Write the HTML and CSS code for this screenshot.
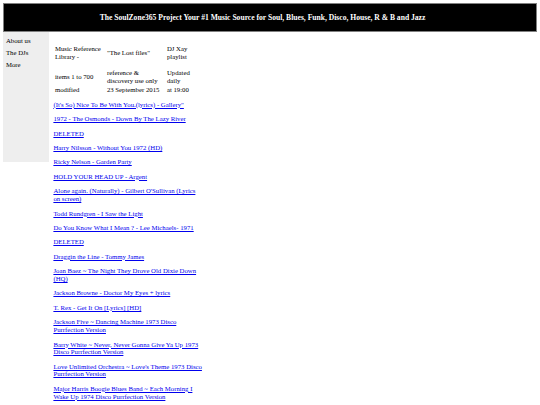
FILE: index.html
```html
<!DOCTYPE html>
<html lang="en">
<head>
<meta charset="utf-8">
<title>The SoulZone365 Project</title>
<link rel="stylesheet" href="styles.css">
</head>
<body>
<div class="header">
  <div class="title">The SoulZone365 Project Your #1 Music Source for Soul, Blues, Funk, Disco, House, R &amp; B and Jazz</div>
</div>
<div class="main">
  <div class="sidebar">
    <div class="nav-item">About us</div>
    <div class="nav-item">The DJs</div>
    <div class="nav-item">More</div>
  </div>
  <div class="content">
    <table class="info">
      <tr class="first">
        <td class="c1">Music Reference Library -</td>
        <td class="c2">"The Lost files"</td>
        <td class="c3">DJ Xay playlist</td>
      </tr>
      <tr>
        <td class="c1">items 1 to 700</td>
        <td class="c2">reference &amp; discovery use only</td>
        <td class="c3">Updated daily</td>
      </tr>
      <tr>
        <td class="c1">modified</td>
        <td class="c2">23 September 2015</td>
        <td class="c3">at 19:00</td>
      </tr>
    </table>
    <p><a href="#">(It's So) Nice To Be With You.(lyrics) - Gallery"</a></p>
    <p><a href="#">1972 - The Osmonds - Down By The Lazy River</a></p>
    <p><a href="#">DELETED</a></p>
    <p><a href="#">Harry Nilsson - Without You 1972 (HD)</a></p>
    <p><a href="#">Ricky Nelson - Garden Party</a></p>
    <p><a href="#">HOLD YOUR HEAD UP - Argent</a></p>
    <p><a href="#">Alone again. (Naturally) - Gilbert O'Sullivan (Lyrics on screen)</a></p>
    <p><a href="#">Todd Rundgren - I Saw the Light</a></p>
    <p><a href="#">Do You Know What I Mean ? - Lee Michaels- 1971</a></p>
    <p><a href="#">DELETED</a></p>
    <p><a href="#">Draggin the Line - Tommy James</a></p>
    <p><a href="#">Joan Baez ~ The Night They Drove Old Dixie Down (HQ)</a></p>
    <p><a href="#">Jackson Browne - Doctor My Eyes + lyrics</a></p>
    <p><a href="#">T. Rex - Get It On [Lyrics] [HD]</a></p>
    <p><a href="#">Jackson Five ~ Dancing Machine 1973 Disco Purrfection Version</a></p>
    <p><a href="#">Barry White ~ Never, Never Gonna Give Ya Up 1973 Disco Purrfection Version</a></p>
    <p><a href="#">Love Unlimited Orchestra ~ Love's Theme 1973 Disco Purrfection Version</a></p>
    <p><a href="#">Major Harris Boogie Blues Band ~ Each Morning I Wake Up 1974 Disco Purrfection Version</a></p>
  </div>
</div>
</body>
</html>
```
FILE: styles.css
```css
html, body {
  background: #ffffff;
}
body {
  margin: 3.4px;
  font-family: "Liberation Serif", "Times New Roman", serif;
  font-size: 6.75px;
  line-height: 7.75px;
  color: #000000;
}
.header {
  background: #000000;
  border: 1px solid #808080;
  height: 27px;
  display: flex;
  align-items: center;
  justify-content: center;
}
.title {
  color: #ffffff;
  font-weight: bold;
  font-size: 7.6px;
  line-height: 9px;
  padding-right: 15px;
}
.main {
  display: flex;
  align-items: flex-start;
}
.sidebar {
  width: 46px;
  height: 125px;
  background: #eeeeee;
  padding-top: 4.8px;
}
.nav-item {
  padding-left: 2.6px;
  margin-bottom: 4.4px;
}
.content {
  margin-left: 4px;
  width: 149px;
}
.info {
  border-collapse: collapse;
  margin: 0;
}
.info td {
  padding: 0.5px 1.5px;
  vertical-align: middle;
}
.info tr.first td {
  padding-top: 12.7px;
  padding-bottom: 8.2px;
}
.info .c1 { width: 49px; }
.info .c2 { width: 57px; }
.info .c3 { width: 28px; }
p {
  margin: 6.7px 0;
}
a {
  color: #0000ee;
}
```
